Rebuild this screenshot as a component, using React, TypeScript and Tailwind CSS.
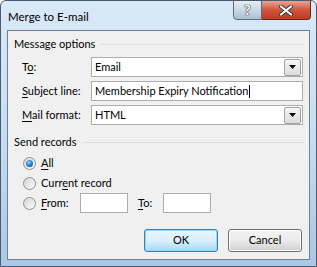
import type { ReactNode } from 'react'

const font = { fontFamily: 'Lato, "Noto Sans", sans-serif' }

function Key({ children }: { children: ReactNode }) {
    return <span className="underline underline-offset-[2px]">{children}</span>
}

function Arrow() {
    return (
        <div className="w-[17px] h-[17px] border border-[#a0a0a0] bg-gradient-to-b from-[#f6f6f6] to-[#dcdcdc] flex items-center justify-center rounded-[2px]">
            <svg width="7" height="4" viewBox="0 0 7 4">
                <path d="M0 0h7L3.5 4z" fill="#000" />
            </svg>
        </div>
    )
}

function Radio({ checked }: { checked?: boolean }) {
    return (
        <div className="w-[13px] h-[13px] rounded-full border border-[#8e8f8f] bg-gradient-to-br from-[#d6d6d6] to-[#fbfbfb] flex items-center justify-center shrink-0">
            {checked && (
                <div className="w-[7px] h-[7px] rounded-full bg-[radial-gradient(circle_at_40%_35%,#8fd0ff,#1a6fb8_60%,#0c4d8c)]" />
            )}
        </div>
    )
}

function Heading({ title }: { title: string }) {
    return (
        <div className="flex items-center gap-[6px] pl-[6px] pr-[5px] h-[16px]">
            <span>{title}</span>
            <div className="flex-1 h-px bg-[#d5dfe5]" />
        </div>
    )
}

export default function App() {
    return (
        <div
            className="w-[317px] h-[267px] text-[11px] text-black bg-gradient-to-b from-[#d9e9f8] via-[#c8ddf2] to-[#a9c7e6] border border-[#4b5a6c] rounded-t-[6px] flex flex-col overflow-hidden"
            style={font}
        >
            <div className="h-[29px] flex items-start justify-between pl-[7px] pr-[5px] shrink-0">
                <span className="mt-[7px] text-[11.5px]">Merge to E-mail</span>
                <div className="flex -mt-px">
                    <div className="w-[29px] h-[20px] border border-[#5b6b7d] rounded-bl-[4px] bg-gradient-to-b from-[#e6eef6] via-[#c9d7e6] to-[#aebfd2] flex items-center justify-center">
                        <span
                            className="font-bold text-[14px] text-white leading-none"
                            style={{ textShadow: '0 0 1px #333, 0 0 1px #333, 0 0 1px #333' }}
                        >
                            ?
                        </span>
                    </div>
                    <div className="w-[49px] h-[20px] border border-l-0 border-[#5b2a23] rounded-br-[4px] bg-gradient-to-b from-[#e8a493] via-[#d0533a] to-[#c23a22] flex items-center justify-center">
                        <svg width="14" height="11" viewBox="0 0 14 11">
                            <path d="M2 1.5l10 8M12 1.5l-10 8" stroke="#3a3a3a" strokeWidth="4" strokeLinecap="round" />
                            <path d="M2 1.5l10 8M12 1.5l-10 8" stroke="#fff" strokeWidth="2.2" strokeLinecap="round" />
                        </svg>
                    </div>
                </div>
            </div>
            <div className="mx-[6px] h-[230px] border border-[#6f8093] bg-[#f0f0f0] flex flex-col pt-[5px]">
                <Heading title="Message options" />
                <div className="flex flex-col gap-[4px] pl-[14px] pr-[6px] mt-[5px]">
                    <div className="flex items-center">
                        <span className="w-[69px]">
                            T<Key>o</Key>:
                        </span>
                        <div className="flex-1 h-[20px] border border-[#abadb3] bg-white flex items-center justify-between pl-[3px] pr-px">
                            <span>Email</span>
                            <Arrow />
                        </div>
                    </div>
                    <div className="flex items-center">
                        <span className="w-[69px]">
                            <Key>S</Key>ubject line:
                        </span>
                        <div className="flex-1 h-[20px] border border-[#abadb3] bg-white flex items-center pl-[3px]">
                            <span>Membership Expiry Notification</span>
                            <div className="w-px h-[13px] bg-black ml-px" />
                        </div>
                    </div>
                    <div className="flex items-center">
                        <span className="w-[69px]">
                            <Key>M</Key>ail format:
                        </span>
                        <div className="flex-1 h-[20px] border border-[#abadb3] bg-white flex items-center justify-between pl-[3px] pr-px">
                            <span>HTML</span>
                            <Arrow />
                        </div>
                    </div>
                </div>
                <div className="mt-[9px]">
                    <Heading title="Send records" />
                </div>
                <div className="flex flex-col pl-[15px] mt-[3px]">
                    <div className="flex items-center gap-[5px] h-[20px]">
                        <Radio checked />
                        <span>
                            <Key>A</Key>ll
                        </span>
                    </div>
                    <div className="flex items-center gap-[5px] h-[20px]">
                        <Radio />
                        <span>
                            Curr<Key>e</Key>nt record
                        </span>
                    </div>
                    <div className="flex items-center h-[20px]">
                        <Radio />
                        <span className="ml-[5px] w-[39px]">
                            <Key>F</Key>rom:
                        </span>
                        <div className="w-[48px] h-[20px] border border-[#abadb3] bg-white" />
                        <span className="ml-[10px] w-[25px]">
                            <Key>T</Key>o:
                        </span>
                        <div className="w-[48px] h-[20px] border border-[#abadb3] bg-white" />
                    </div>
                </div>
                <div className="flex justify-end gap-[10px] pr-[7px] mt-[16px]">
                    <button className="w-[74px] h-[23px] rounded-[3px] border border-[#3c7fb1] bg-gradient-to-b from-[#eaf6fd] via-[#d9f0fc] to-[#a7d9f5] shadow-[inset_0_0_0_1px_#97d5f5]">
                        OK
                    </button>
                    <button className="w-[74px] h-[23px] rounded-[3px] border border-[#707070] bg-gradient-to-b from-[#f2f2f2] via-[#ebebeb] to-[#cfcfcf] shadow-[inset_0_0_0_1px_#fcfcfc]">
                        Cancel
                    </button>
                </div>
            </div>
        </div>
    )
}
